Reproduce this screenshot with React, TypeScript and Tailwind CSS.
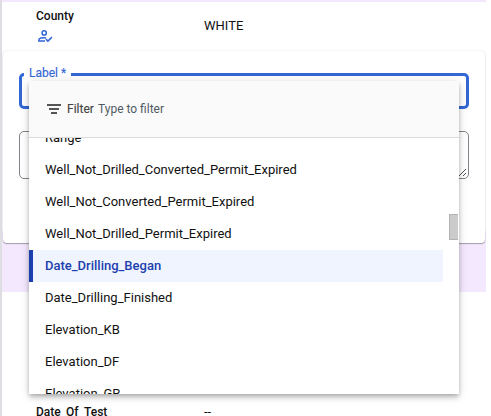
const options = [
  "Range",
  "Well_Not_Drilled_Converted_Permit_Expired",
  "Well_Not_Converted_Permit_Expired",
  "Well_Not_Drilled_Permit_Expired",
  "Date_Drilling_Began",
  "Date_Drilling_Finished",
  "Elevation_KB",
  "Elevation_DF",
  "Elevation_GR",
];

function ReviewedIcon() {
  return (
    <svg
      className="mt-[3px] size-[18px]"
      viewBox="0 0 18 18"
      fill="none"
      stroke="#3367d6"
      strokeWidth="1.5"
    >
      <circle cx="8.2" cy="4.9" r="2.1" />
      <path d="M10 9.9c-3.6-.7-7.2.4-7.2 2.2v.8h6.2M9.9 11.1l2 2 4-4" />
    </svg>
  );
}

function LabelMenu() {
  return (
    <div className="absolute left-[29px] top-[81px] flex h-[313px] w-[430px] flex-col bg-white shadow-[0_2px_4px_-1px_rgba(0,0,0,0.2),0_4px_5px_0_rgba(0,0,0,0.14),0_1px_10px_0_rgba(0,0,0,0.12)]">
      <div className="flex h-[57px] shrink-0 items-center border-b border-[#dadada] bg-[#fafafa] pl-[18px]">
        <svg className="h-[10px] w-[14px]" viewBox="0 0 14 10" fill="#555">
          <path d="M0 0h14v1.9H0zM2 4h10v1.9H2zM4 8h6v1.9H4z" />
        </svg>
        <span className="ml-[6px] w-[27px] text-[12px] text-[#444] [-webkit-text-stroke:0.15px_#444]">
          Filter
        </span>
        <span className="ml-1 text-[12px] text-[#505a64]">Type to filter</span>
      </div>
      <div className="flex min-h-0 flex-1 justify-between overflow-hidden">
        <ul className="-mt-4 w-[414px] shrink-0">
          {options.map((option) => (
            <li
              key={option}
              className={
                option === "Date_Drilling_Began"
                  ? "flex h-8 items-center border-l-4 border-[#1d3fae] bg-[#eff4fe] pl-3 text-[13px] font-medium text-[#1d3fae]"
                  : "flex h-8 items-center pl-4 text-[13px] text-[#111]"
              }
            >
              {option}
            </li>
          ))}
        </ul>
        <div className="mr-px mt-[76px] h-[26px] w-[9px] border-y border-l border-[#b3b3b3] bg-[#cbcbcb]" />
      </div>
    </div>
  );
}

export default function App() {
  return (
    <div className="relative h-[416px] w-[491px] overflow-hidden bg-white font-[Roboto,sans-serif] text-[#111]">
      <div className="flex h-full w-[486px] flex-col border-l-2 border-[#dddde2]">
        <div className="h-0.5 shrink-0 bg-[#f3e8fd]" />
        <div className="flex h-[49px] shrink-0 pl-[34px]">
          <div className="w-[168px] pt-[5px]">
            <div className="text-[12px] font-medium leading-[18px]">County</div>
            <ReviewedIcon />
          </div>
          <div className="pt-[14px] text-[13px] leading-5">WHITE</div>
        </div>
        <div className="h-[241px] shrink-0 bg-[linear-gradient(#fff_180px,#f3e8fd_180px)]">
          <div className="mx-px h-48 rounded-[4px] bg-white px-4 pt-[22px] shadow-[0_1px_1px_rgba(0,0,0,0.3),0_0_2px_rgba(0,0,0,0.14)]">
            <div className="relative h-[36px] rounded-[5px] border-[3px] border-[#3367d6]">
              <span className="absolute -top-[11px] left-[2px] bg-white px-[5px] text-[12px] leading-4 text-[#3367d6] [-webkit-text-stroke:0.15px_#3367d6]">
                Label *
              </span>
            </div>
            <div className="mt-[22px] flex h-12 items-end justify-end rounded-[5px] border border-[#80868b] p-px">
              <svg width="9" height="9" viewBox="0 0 9 9" fill="none" stroke="#555" strokeWidth="1">
                <path d="M1 8 8 1M5 8 8 5" />
              </svg>
            </div>
          </div>
        </div>
        <div className="flex flex-1 pl-[34px] pt-[111px] leading-[18px]">
          <div className="w-[168px] text-[12px] font-medium">Date_Of_Test</div>
          <div className="text-[13px]">--</div>
        </div>
      </div>
      <LabelMenu />
    </div>
  );
}
